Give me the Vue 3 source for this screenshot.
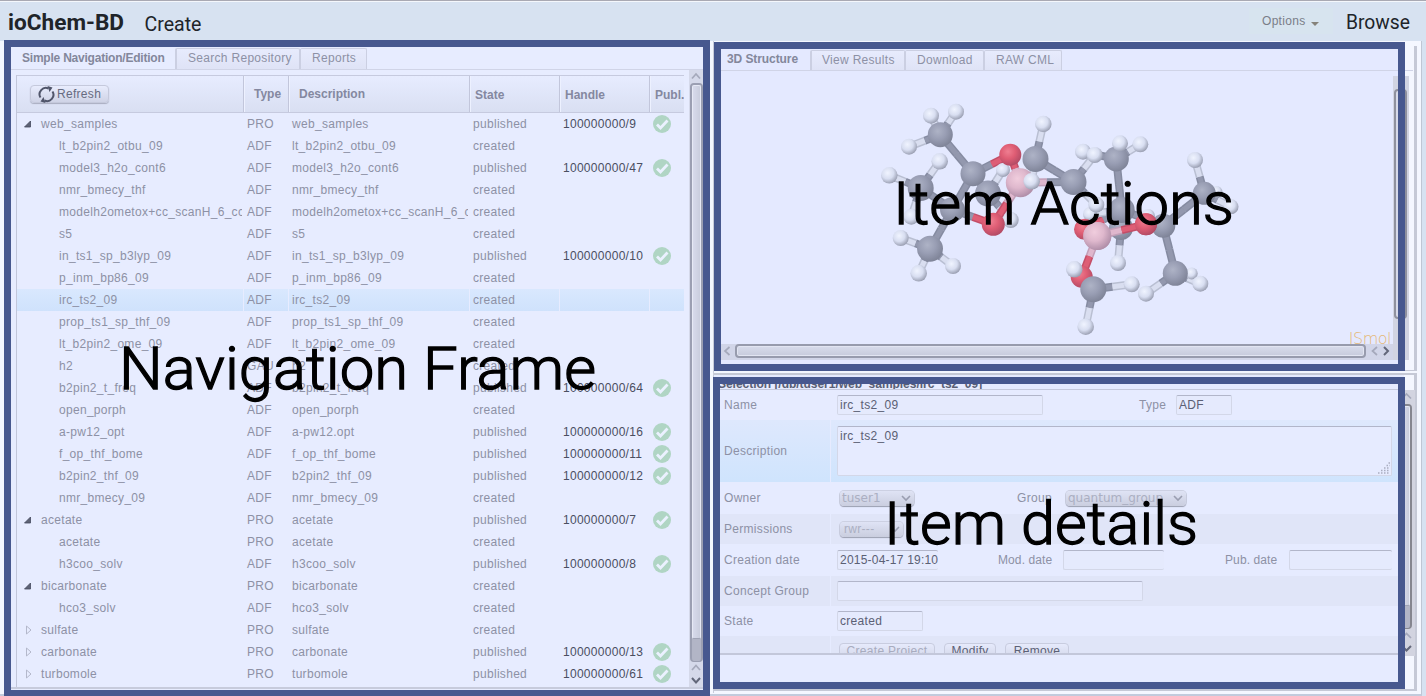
<script setup>
const rows = [
  ['web_samples', 'PRO', 'web_samples', '9', 'open'],
  ['lt_b2pin2_otbu_09', 'ADF'],
  ['model3_h2o_cont6', 'ADF', '', '47'],
  ['nmr_bmecy_thf', 'ADF'],
  ['modelh2ometox+cc_scanH_6_cc', 'ADF'],
  ['s5', 'ADF'],
  ['in_ts1_sp_b3lyp_09', 'ADF', '', '10'],
  ['p_inm_bp86_09', 'ADF'],
  ['irc_ts2_09', 'ADF'],
  ['prop_ts1_sp_thf_09', 'ADF'],
  ['lt_b2pin2_ome_09', 'ADF'],
  ['h2', 'GAU'],
  ['b2pin2_t_freq', 'ADF', '', '64'],
  ['open_porph', 'ADF'],
  ['a-pw12_opt', 'ADF', 'a-pw12.opt', '16'],
  ['f_op_thf_bome', 'ADF', '', '11'],
  ['b2pin2_thf_09', 'ADF', '', '12'],
  ['nmr_bmecy_09', 'ADF'],
  ['acetate', 'PRO', '', '7', 'open'],
  ['acetate', 'PRO'],
  ['h3coo_solv', 'ADF', '', '8'],
  ['bicarbonate', 'PRO', '', '', 'open'],
  ['hco3_solv', 'ADF'],
  ['sulfate', 'PRO', '', '', 'closed'],
  ['carbonate', 'PRO', '', '13', 'closed'],
  ['turbomole', 'PRO', '', '61', 'closed'],
].map(([name, type, desc, handle, toggle]) => ({ name, type, desc: desc || name, handle, toggle }))

// id: [element, x, y, radius], listed back to front
const atoms = {
  h6a: ['H', 1003, 170, 7], h6b: ['H', 1010.7, 220, 8], c6: ['C', 988, 193.5, 13],
  h4c: ['H', 911.3, 216.7, 8], c5: ['C', 952.5, 209.5, 12.5],
  h13c: ['H', 1216.5, 192, 6], h14c: ['H', 1191.7, 273.5, 6],
  h10b: ['H', 1148, 216, 7], h10a: ['H', 1090, 214, 7], c11: ['C', 1121, 228, 12],
  h11: ['H', 1118, 263, 8], c10: ['C', 1121.7, 210, 13], o3: ['O', 1084.5, 229.3, 10.5],
  c1: ['C', 940.3, 134.7, 12.5], h1a: ['H', 931, 115.7, 8], h1b: ['H', 956, 111.7, 8], h1c: ['H', 909, 146.7, 8],
  c2: ['C', 973, 173.7, 12.5], o1: ['O', 1010.3, 154.7, 11], b1: ['B', 1020.3, 182.7, 14.5],
  c3: ['C', 1035.5, 159, 13], h3a: ['H', 1043.3, 124, 8.3], h3b: ['H', 1031.7, 181.3, 8.3],
  c4: ['C', 920.7, 188, 13], h4a: ['H', 939.7, 161.3, 8.3], h4b: ['H', 889.3, 175.3, 8.3],
  o2: ['O', 993.3, 224.3, 11.5], c7: ['C', 930, 248.7, 13], h7a: ['H', 900.7, 238, 8],
  h7b: ['H', 918.7, 273.3, 8.3], h7c: ['H', 953, 266, 8],
  c8: ['C', 1073.5, 182, 13], h8a: ['H', 1083, 151.7, 8], h8b: ['H', 1096.3, 204.7, 8],
  c9: ['C', 1116.3, 159, 12.5], h9c: ['H', 1094.7, 155, 8], h9a: ['H', 1120, 143.3, 8], h9b: ['H', 1140.3, 144.3, 8],
  b2: ['B', 1097.3, 236, 14], c12: ['C', 1163.3, 225.7, 12], o4: ['O', 1146, 224.3, 11],
  c13: ['C', 1204.3, 193.3, 11.5], h13a: ['H', 1195, 160, 8], h13b: ['H', 1231, 206.7, 7.5],
  c14: ['C', 1175.3, 273.3, 12.5], h14a: ['H', 1146, 293.7, 8], h14b: ['H', 1200.3, 283.7, 8],
  o5: ['O', 1081.7, 276.7, 11], h15c: ['H', 1074.3, 269.3, 8.3], c15: ['C', 1093.3, 289.3, 13],
  h15a: ['H', 1131.7, 284.3, 8], h15b: ['H', 1085.7, 326.7, 8.3],
}
const links = [
  'c6 h6a', 'c6 h6b', 'c2 c6', 'c4 h4c', 'c2 c5', 'c4 c5', 'c5 o2', 'c5 c7', 'c1 c2', 'c1 h1a', 'c1 h1b', 'c1 h1c',
  'c2 o1', 'o1 b1', 'b1 o2', 'b1 c8', 'c3 c8', 'c3 h3a', 'c3 h3b', 'c4 h4a', 'c4 h4b', 'c7 h7a', 'c7 h7b', 'c7 h7c',
  'c8 h9c', 'c8 h8b', 'c9 h8a', 'c9 h9a', 'c9 h9b', 'c9 c10', 'c10 o3', 'c10 c12', 'c11 h11', 'c10 h10a', 'c12 c13',
  'c13 h13a', 'c13 h13b', 'c13 h13c', 'c12 c14', 'c14 h14a', 'c14 h14b', 'c14 h14c', 'b2 o5', 'c15 h15a', 'c15 h15b', 'c15 h15c',
]
const edge = { C: '#858ba1', H: '#b9bfd2', O: '#c34e68', B: '#c39fb8' }
const core = { C: '#9398ae', H: '#d9def0', O: '#de5e76', B: '#dfb7cd' }
const halves = (pairs) => pairs.flatMap((p) => {
  const [a, b] = p.split(' ').map((k) => atoms[k])
  const mx = (a[1] + b[1]) / 2
  const my = (a[2] + b[2]) / 2
  return [a, b].map((t) => ({ el: t[0], x1: t[1], y1: t[2], x2: mx, y2: my }))
})
const bonds = halves(links)
const frontBonds = halves(['b2 o4'])
const frontAtoms = [atoms.b2, atoms.o4]
</script>

<template>
  <div class="app">
    <header>
      <svg class="brand" width="230" height="38">
        <text x="8" y="28" class="b1" textLength="116" lengthAdjust="spacingAndGlyphs">ioChem-BD</text>
        <text x="144.500" y="28.500" class="b2" textLength="57" lengthAdjust="spacingAndGlyphs">Create</text>
      </svg>
      <div class="options"><span>Options</span><i></i></div>
      <svg class="browse" width="80" height="38">
        <text x="0" y="26.500" class="b3" textLength="64" lengthAdjust="spacingAndGlyphs">Browse</text>
      </svg>
    </header>

    <main>
      <section class="nav">
        <div class="tabs">
          <b class="t1">Simple Navigation/Edition</b><span class="t2">Search Repository</span><span class="t3">Reports</span>
        </div>
        <div class="navbody">
          <div class="table">
            <div class="row head">
              <div class="cell"><button class="refresh">
                <svg width="17" height="17" viewBox="0 0 17 17" fill="none" stroke="#50556a" stroke-width="2">
                  <path d="M2.500 11.500A6.300 6.300 0 0 1 10.500 2.500M14.500 5.500A6.300 6.300 0 0 1 6.500 14.500" />
                  <path d="M9.500 0L14.500 1.500 11.500 6zM7.500 17L2.500 15.500 5.500 11z" fill="#50556a" stroke="none" />
                </svg>Refresh</button></div>
              <div class="cell c2">Type</div><div class="cell c3">Description</div><div class="cell c4">State</div>
              <div class="cell c4">Handle</div><div class="cell c4">Publ.</div>
            </div>
            <div v-for="(r, i) in rows" :key="i" class="row" :class="{ sel: i === 8 }">
              <div class="cell name" :class="{ child: !r.toggle }">
                <svg v-if="r.toggle" width="24" height="12">
                  <path v-if="r.toggle === 'open'" d="M7.500 9h6V3z" fill="#5d6275" stroke="#454a5e" stroke-width=".8" />
                  <path v-else d="M9.500 2v8l4.500-4z" fill="none" stroke="#b4b8cb" />
                </svg>{{ r.name }}
              </div>
              <div class="cell">{{ r.type }}</div>
              <div class="cell">{{ r.desc }}</div>
              <div class="cell">{{ r.handle ? 'published' : 'created' }}</div>
              <div class="cell handle">{{ r.handle ? '100000000/' + r.handle : '' }}</div>
              <div class="cell check">
                <svg v-if="r.handle" width="18" height="18"><circle cx="9" cy="9" r="9" fill="#b0d5c4" />
                  <path d="M4 9.500L7.500 13 14.500 5.500" fill="none" stroke="#ebf1ff" stroke-width="2.800" /></svg>
              </div>
            </div>
          </div>
          <div class="vscroll">
            <svg width="14" height="13"><path d="M3 8.500L7 4l4 4.500" /></svg>
            <div class="track"><div class="thumb"></div></div>
            <svg width="14" height="25"><path d="M3 8L7 3.500 11 8" /><path class="dk" d="M3 16l4 4.500 4-4.500" /></svg>
          </div>
        </div>
      </section>

      <div class="right">
        <div class="upper">
        <section class="actions">
          <div class="tabs">
            <b class="t1">3D Structure</b><span class="t2">View Results</span><span class="t3">Download</span><span class="t4">RAW CML</span>
          </div>
          <div class="viewer">
            <div class="stage">
              <div class="canvas"><span class="jsmol">JSmol</span></div>
              <div class="hscroll">
                <svg width="14" height="14"><path d="M8.500 3L4 7l4.500 4" /></svg>
                <div class="hthumb"></div>
                <svg width="27" height="14"><path d="M11 3L6.500 7l4.500 4" /><path class="dk" d="M18 3l4 4-4 4" /></svg>
              </div>
            </div>
            <div class="vs2"><div class="th2"></div></div>
          </div>
        </section>
        </div>

        <section class="details">
          <div class="form">
            <div class="title">Selection [/db/tuser1/web_samples/irc_ts2_09]</div>
            <div class="f h30"><label>Name</label><div><span class="in w206">irc_ts2_09</span><em class="g97">Type</em><span class="in w56">ADF</span></div></div>
            <div class="f h62 hot"><label>Description</label><div><span class="area">irc_ts2_09
              <svg width="12" height="12"><path d="M0 11h12M3 8.500h9M6 6h6M8.500 3.500H12M10.500 1H12" stroke="#a9adc0" stroke-width="1.500" stroke-dasharray="1.500 1.500" /></svg></span></div></div>
            <div class="f h32"><label>Owner</label><div><span class="pick w76">tuser1<svg width="12" height="12"><path d="M2 4l4 4 4-4" /></svg></span><em class="g102">Group</em><span class="pick w122">quantum_group<svg width="12" height="12"><path d="M2 4l4 4 4-4" /></svg></span></div></div>
            <div class="f h30 alt"><label>Permissions</label><div><span class="pick sans w65">rwr---<svg width="12" height="12"><path d="M2 4l4 4 4-4" /></svg></span></div></div>
            <div class="f h32"><label>Creation date</label><div><span class="in open">2015-04-17 19:10</span><em class="g60">Mod. date</em><span class="in open"></span><em class="g61">Pub. date</em><span class="in open w103"></span></div></div>
            <div class="f h30 alt"><label>Concept Group</label><div><span class="in w306"></span></div></div>
            <div class="f h30"><label>State</label><div><span class="in w86">created</span></div></div>
            <div class="f last alt"><label></label><div><span class="btn off w96">Create Project</span><span class="btn w52">Modify</span><span class="btn w64">Remove</span></div></div>
          </div>
          <div class="vs3">
            <svg width="16" height="14"><path d="M3 8.500L7.500 4l4.500 4.500" /></svg>
            <div class="track"><div class="thumb"></div></div>
            <svg width="16" height="27"><path d="M3 9l4.500-4.500L12 9" /><path class="dk" d="M3 17l4.500 4.500L12 17" /></svg>
          </div>
        </section>
      </div>
    </main>

    <svg class="overlay" width="1426" height="696" viewBox="0 0 1426 696">
      <defs>
        <radialGradient id="gC" cx=".4" cy=".36" r=".65"><stop offset="0" stop-color="#aeb3c6" /><stop offset=".5" stop-color="#999eb4" /><stop offset="1" stop-color="#7f8498" /></radialGradient>
        <radialGradient id="gH" cx=".4" cy=".36" r=".65"><stop offset="0" stop-color="#f0f4ff" /><stop offset=".55" stop-color="#d8def1" /><stop offset="1" stop-color="#9a9fb2" /></radialGradient>
        <radialGradient id="gO" cx=".4" cy=".36" r=".65"><stop offset="0" stop-color="#ef7e91" /><stop offset=".5" stop-color="#df5d74" /><stop offset="1" stop-color="#b34b65" /></radialGradient>
        <radialGradient id="gB" cx=".4" cy=".36" r=".65"><stop offset="0" stop-color="#f0cddd" /><stop offset=".5" stop-color="#dfb8cd" /><stop offset="1" stop-color="#b18fa9" /></radialGradient>
      </defs>
      <g v-for="(b, i) in bonds" :key="'b' + i">
        <line :x1="b.x1" :y1="b.y1" :x2="b.x2" :y2="b.y2" :stroke="edge[b.el]" stroke-width="8" />
        <line :x1="b.x1" :y1="b.y1" :x2="b.x2" :y2="b.y2" :stroke="core[b.el]" stroke-width="5" />
      </g>
      <circle v-for="(a, k) in atoms" :key="k" :cx="a[1]" :cy="a[2]" :r="a[3]" :fill="`url(#g${a[0]})`" />
      <g v-for="(b, i) in frontBonds" :key="'f' + i">
        <line :x1="b.x1" :y1="b.y1" :x2="b.x2" :y2="b.y2" :stroke="edge[b.el]" stroke-width="8" />
        <line :x1="b.x1" :y1="b.y1" :x2="b.x2" :y2="b.y2" :stroke="core[b.el]" stroke-width="5" />
      </g>
      <circle v-for="(a, i) in frontAtoms" :key="'t' + i" :cx="a[1]" :cy="a[2]" :r="a[3]" :fill="`url(#g${a[0]})`" />
      <g fill="none" stroke="#47588f" stroke-width="7">
        <rect x="7.500" y="43.500" width="699" height="650" />
        <rect x="717.500" y="45.500" width="684" height="322" />
        <rect x="716.500" y="380.500" width="685" height="305" />
      </g>
      <g class="big">
        <text x="119" y="388.500" textLength="477" lengthAdjust="spacingAndGlyphs">Navigation Frame</text>
        <text x="893" y="223.500" textLength="341" lengthAdjust="spacingAndGlyphs">Item Actions</text>
        <text x="884" y="543.500" textLength="314" lengthAdjust="spacingAndGlyphs">Item details</text>
      </g>
    </svg>
  </div>
</template>

<style>
body { margin: 0; overflow: hidden; }
</style>

<style scoped>
* { box-sizing: border-box; }
.app { position: relative; width: 1426px; height: 696px; overflow: hidden; background: #d7e2f1; font: 12px/22px "Liberation Sans", Arial, sans-serif; letter-spacing: .3px; color: #8d91a5; border-top: 1px solid #a9a9b3; }
header { height: 40px; display: flex; border-top: 1px solid #f4f7fc; }
.brand { flex: none; }
header text { font-family: Roboto, sans-serif; fill: #202429; letter-spacing: 0; }
.b1 { font-size: 22px; font-weight: 700; }
.b2, .b3 { font-size: 20px; font-weight: 400; }
.options { margin-left: 1019px; width: 84px; height: 26px; margin-top: 6px; padding-left: 13px; display: flex; align-items: center; color: #7a7e88; background: #d7e4ef; line-height: 24px; }
.options i { margin: 6px 0 0 6px; border: 4px solid transparent; border-top-color: #85827a; border-bottom: 0; }
.browse { margin-left: 13px; }
.overlay { position: absolute; left: 0; top: -1px; }
.big text { font: 300 60px Roboto, sans-serif; letter-spacing: 0; fill: #000; stroke: #000; stroke-width: 1.3; }
main { display: flex; height: 655px; border-bottom: 2px solid #c2cbdc; width: 1422px; background: #f4f7ff; border-right: 1px solid #bfc6d4; padding-bottom: 1px; }

.tabs { display: flex; height: 23px; border-bottom: 1px solid #d0d4e7; line-height: 22px; }
.tabs b { letter-spacing: -.22px; color: #83879b; white-space: nowrap; }
.tabs span { border: 1px solid #cbcfe2; border-left-width: 2px; border-bottom: 0; background: linear-gradient(#e7ebfd, #dfe3f6); padding-left: 11px; margin-top: 1px; line-height: 19px; border-radius: 2px 2px 0 0; white-space: nowrap; }
.tabs span + span { border-left-width: 1px; }

.nav { margin-left: 4px; width: 706px; padding: 6px 7px 0 7px; background: #e7ecff; flex: none; }
.nav .t1 { width: 164px; padding-left: 11px; }
.nav .t2 { width: 125px; } .nav .t3 { width: 67px; }
.navbody { display: flex; height: 619px; border-bottom: 2px solid #c7cbdc; }
.table { margin: 5px 0 0 5px; width: 668px; border-left: 1px solid #c2c6da; height: 612px; }
.row { display: grid; grid-template-columns: 227px 45px 181px 90px 90px 34px; height: 22px; white-space: nowrap; }
.cell { overflow: hidden; padding-left: 3px; margin-right: 2px; }
.cell:last-child { margin-right: 0; }
.head { height: 38px; border: solid #c6cadf; border-width: 1px 0; background: linear-gradient(#e7ecff, #d9dff2); font-weight: 700; line-height: 36px; letter-spacing: 0; color: #8488a0; }
.head .cell { border-right: 1px solid #c2c6db; margin-right: 0; }
.head .cell + .cell { border-left: 1px solid #edf1ff; }
.head .cell:last-child { border-right: 0; }
.head .c2 { padding-left: 9px; } .head .c3 { padding-left: 9px; } .head .c4 { padding-left: 4px; line-height: 38px; }
.refresh { margin: 9px 0 0 10px; width: 79px; height: 18px; display: flex; align-items: center; gap: 2px; padding: 0 0 0 7px; border: 1px solid #c5c9dc; border-radius: 4px; background: linear-gradient(#e8ecfd, #cfd3e6); box-shadow: 0 1px 1px #a9adc0; font: 12px "Liberation Sans", sans-serif; letter-spacing: .3px; color: #666b80; }
.name { display: flex; align-items: center; padding-left: 0; }
.name.child { display: block; padding-left: 42px; }
.handle { color: #4a4e61; letter-spacing: .28px; }
.check { padding: 2px 0 0 3px; line-height: 0; }
.sel .cell { background: linear-gradient(#d9e8fe, #cfe2fc); margin-right: 1px; }
.sel .cell:last-child { margin-right: 0; }
.vscroll { margin-left: 5px; width: 14px; background: #d5d9ea; display: flex; flex-direction: column; height: 617px; }
.vscroll svg path, .hscroll svg path, .vs3 svg path { fill: none; stroke: #a5a9bb; stroke-width: 1.7; }
.vscroll svg .dk, .hscroll svg .dk, .vs3 svg .dk { stroke: #62677a; stroke-width: 2; }
.vscroll svg, .vs3 svg { flex: none; }
.track { flex: 1; border: 2px solid #9b9fb2; border-bottom: 1px solid #9b9fb2; border-radius: 4px; margin: 0 0 0 1px; background: #b2b5c6; }
.thumb { height: calc(100% - 22px); border: 1px solid #e6e9f5; border-radius: 2px; background: linear-gradient(90deg, #d7daeb, #c9cddd); border-bottom: 1px solid #9fa3b5; }

.right { margin-left: 3px; border-left: 1px solid #c8ccda; width: 704px; }
.upper { width: 703px; height: 332px; padding-top: 5px; }
.actions { height: 325px; margin-top: 0; padding: 3px 0 0 7px; width: 703px; border: solid #c5c9d6; border-width: 0 3px 1px 0; background: linear-gradient(90deg, #e4e9ff 690px, #f4f7ff 690px); }
.actions .tabs { width: 692px; height: 22px; line-height: 20px; }
.actions .t1 { width: 89px; padding-left: 6px; letter-spacing: -.08px; }
.actions .tabs span { line-height: 18px; }
.actions .t2 { width: 95px; padding-left: 10px; } .actions .t3 { width: 79px; } .actions .t4 { width: 78px; }
.viewer { display: flex; margin-top: 5px; }
.stage { width: 672px; flex: none; }
.canvas { height: 268px; display: flex; justify-content: flex-end; align-items: flex-end; padding-right: 2px; overflow: hidden; }
.jsmol { font: 200 16px/18px "DejaVu Sans Light", "DejaVu Sans", sans-serif; color: #e5b878; height: 14px; letter-spacing: -.5px; }
.hscroll { height: 16px; background: #d1d5e8; display: flex; }
.hthumb { flex: 1; height: 14px; border: 2px solid #979bad; border-radius: 4px; background: linear-gradient(#d8dcec, #c7cbdc); box-shadow: inset 0 0 0 1px #e2e5f2; }
.vs2 { width: 16px; height: 284px; background: #d1d4e2; padding: 13px 2px 0 1px; flex: none; }
.th2 { height: 230px; border: 2px solid #8f919e; border-radius: 4px; background: #d7dae9; }

.details { display: flex; background: #e6ebff; height: 318px; width: 703px; padding: 9px 0 0 6px; border: solid #c5c9d6; border-width: 2px 3px 2px 0; background: linear-gradient(90deg, #e6ebff 690px, #f4f7ff 690px); }
.form { width: 679px; border-bottom: 2px solid #c3c7da; border-right: 1px solid #c8ccdf; height: 271px; overflow: hidden; flex: none; }
.title { height: 6px; border-bottom: 1px solid #c5c9dc; line-height: 0; display: flex; align-items: flex-end; font-weight: 700; color: #5a5f74; letter-spacing: -.03px; margin-left: -2px; padding-bottom: 5px; overflow: hidden; white-space: nowrap; }
.f { display: grid; grid-template-columns: 110px 1fr; gap: 1px; }
.f label { padding-left: 4px; display: flex; align-items: center; }
.f > div { padding-left: 6px; display: flex; align-items: center; }
.h30 { height: 30px; } .h32 { height: 32px; } .h62 { height: 62px; }
.last { height: 30px; align-items: start; } .last > div { padding: 7px 0 0 8px; gap: 9px; height: 30px; align-items: flex-start; }
.last label { height: 30px; }
.alt > * { background: #e0e5f8; }
.hot > * { background: linear-gradient(#dee8fd, #cfe4fd); }
em { font-style: normal; white-space: nowrap; flex: none; }
.in { height: 20px; border: 1px solid #d3d7e8; border-top-color: #b2b6ca; border-radius: 2px; padding-left: 2px; line-height: 19px; color: #5b6074; flex: none; background: #e5eafd; white-space: nowrap; }
.open { width: 101px; border-right: 0; letter-spacing: .22px; }
.w206 { width: 206px; } .w56 { width: 56px; } .w103 { width: 103px; } .w306 { width: 306px; } .w86 { width: 86px; }
.g97 { margin-left: 96px; width: 37px; } .g60 { margin-left: 60px; width: 65px; letter-spacing: .1px; } .g61 { margin-left: 61px; width: 64px; letter-spacing: .1px; } .g102 { margin-left: 103px; width: 48px; }
.area { width: 555px; height: 50px; border: 1px solid #d3d7e8; border-top-color: #b2b6ca; background: #e6ebff; color: #5b6074; padding-left: 2px; line-height: 19px; border-radius: 2px; display: flex; justify-content: space-between; }
.area svg { align-self: flex-end; margin: 0 1px 1px 0; }
.pick { height: 15px; margin-left: 3px; border-radius: 4px; background: linear-gradient(#dfe3f5, #cacedf); box-shadow: 0 1px 1px #9da1b3, 0 0 0 1px #ccd0e2; font: 12px/14px "DejaVu Sans", sans-serif; letter-spacing: 0; color: #abafc2; padding: 0 2px; display: flex; justify-content: space-between; align-items: center; flex: none; }
.g102 + .pick { margin-left: 1px; }
.sans { font-family: "Liberation Sans", sans-serif; letter-spacing: .3px; padding-left: 4px; }
.pick path { fill: none; stroke: #9a9eb1; stroke-width: 1.6; }
.w76 { width: 74px; } .w122 { width: 120px; } .w65 { width: 63px; }
.btn { height: 18px; border: 1px solid #c8ccdf; border-radius: 4px; background: linear-gradient(#e6eafc, #d0d4e6); text-align: center; line-height: 15px; color: #5c6176; letter-spacing: .3px; white-space: nowrap; }
.off { color: #a8acbf; } .w96 { width: 96px; } .w52 { width: 52px; } .w64 { width: 64px; }
.vs3 { width: 16px; height: 266px; margin-top: 6px; background: #d2d4e0; display: flex; flex-direction: column; margin-left: 0; }
.vs3 .track { margin-right: 3px; border-color: #85868f; }
</style>
